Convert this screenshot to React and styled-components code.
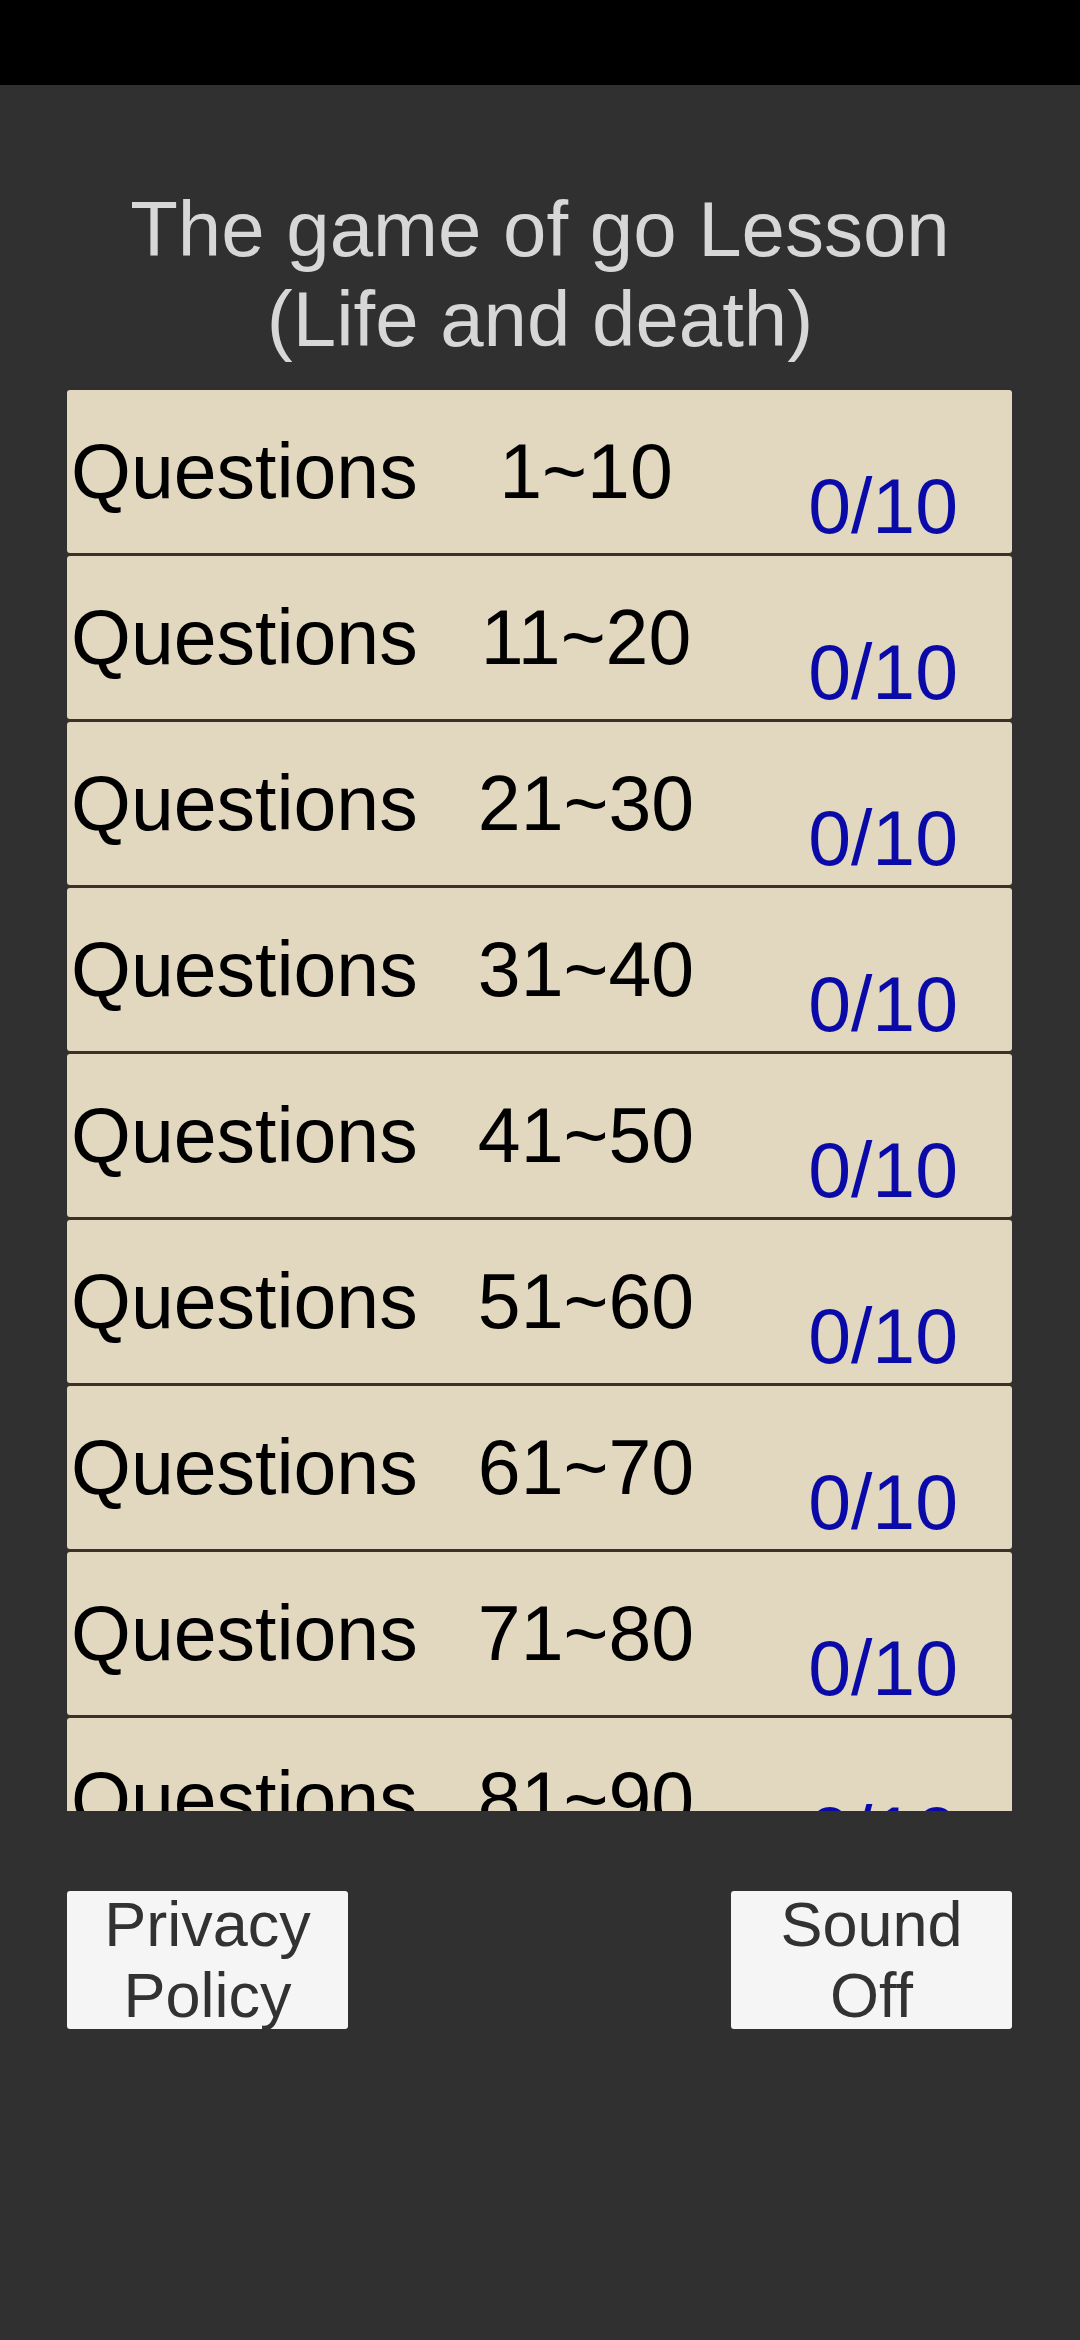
import React from 'react'
import styled, { createGlobalStyle } from 'styled-components'

const GlobalStyle = createGlobalStyle`
  html, body {
    margin: 0;
    padding: 0;
    background-color: #303030;
  }
  body {
    font-family: "Liberation Sans", Arial, sans-serif;
  }
`

const Screen = styled.div`
  width: 1080px;
  height: 2340px;
  display: flex;
  flex-direction: column;
  background-color: #303030;
  overflow: hidden;
`

const StatusBar = styled.div`
  height: 85px;
  background-color: #000;
  flex-shrink: 0;
`

const Title = styled.h1`
  margin: 99px 0 0;
  font-weight: normal;
  font-size: 78px;
  line-height: 90px;
  text-align: center;
  color: #d7d7d7;
`

const List = styled.div`
  margin: 26px 68px 0 67px;
  height: 1421px;
  overflow: hidden;
  display: flex;
  flex-direction: column;
  gap: 3px;
  background-color: #3a3229;
`

const Card = styled.div`
  flex-shrink: 0;
  height: 163px;
  display: grid;
  grid-template-columns: 370px 298px 1fr;
  align-items: start;
  background-color: #e2d7bf;
  border-radius: 3px;
  font-size: 77px;
  line-height: 77px;
`

const Label = styled.div`
  padding: 43px 0 0 4px;
  color: #000;
  white-space: nowrap;
`

const Range = styled.div`
  padding-top: 43px;
  text-align: center;
  color: #000;
  white-space: nowrap;
`

const Score = styled.div`
  padding-top: 78px;
  justify-self: end;
  margin-right: 54px;
  color: #0a0aa8;
  white-space: nowrap;
`

const ButtonRow = styled.div`
  display: flex;
  justify-content: space-between;
  padding: 80px 68px 0 67px;
`

const Button = styled.button`
  width: 281px;
  height: 138px;
  padding: 0;
  border: none;
  border-radius: 3px;
  background-color: #f5f5f5;
  color: #323232;
  font-family: "Liberation Sans", Arial, sans-serif;
  font-size: 63px;
  line-height: 71px;
  display: flex;
  align-items: center;
  justify-content: center;
  text-align: center;
`

const groups = [
  '1~10', '11~20', '21~30', '31~40', '41~50',
  '51~60', '61~70', '71~80', '81~90', '91~100'
]

export default function App() {
  return (
    <Screen>
      <GlobalStyle />
      <StatusBar />
      <Title>
        The game of go Lesson
        <br />
        (Life and death)
      </Title>
      <List>
        {groups.map(range => (
          <Card key={range}>
            <Label>Questions</Label>
            <Range>{range}</Range>
            <Score>0/10</Score>
          </Card>
        ))}
      </List>
      <ButtonRow>
        <Button>Privacy<br />Policy</Button>
        <Button>Sound<br />Off</Button>
      </ButtonRow>
    </Screen>
  )
}
